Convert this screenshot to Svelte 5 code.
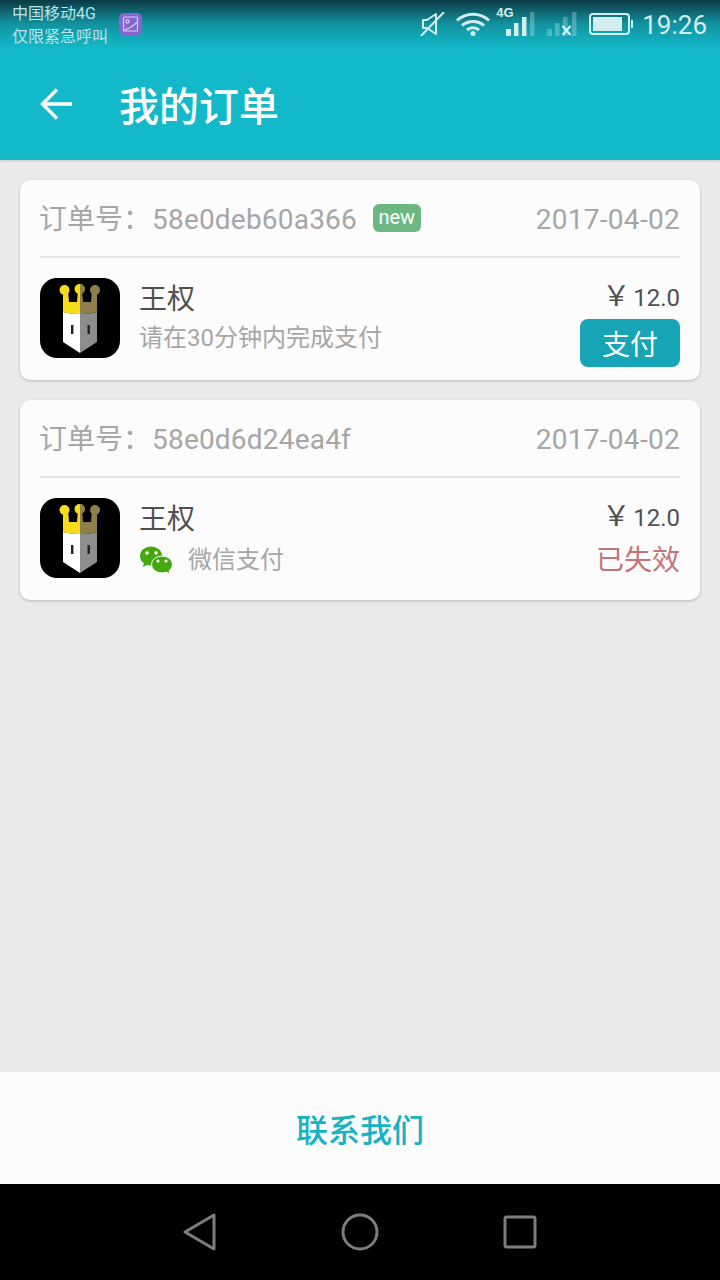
<script>
  const orders = [
    { id: '58e0deb60a366', isNew: true, date: '2017-04-02', name: '王权', price: '12.0', note: '请在30分钟内完成支付', paid: false },
    { id: '58e0d6d24ea4f', isNew: false, date: '2017-04-02', name: '王权', price: '12.0', note: '微信支付', paid: true }
  ];
</script>

<div class="page">
  <header class="header">
    <div class="status">
      <div class="carrier">
        <div>中国移动4G</div>
        <div>仅限紧急呼叫</div>
      </div>
      <span class="gallery">
        <svg viewBox="0 0 23 22" width="23" height="22" fill="none" stroke="#d9cff2" stroke-width="1.2">
          <rect x="4.500" y="4" width="14" height="14" rx="1" />
          <circle cx="8.500" cy="8.500" r="1.600" />
          <path d="M5 17.500C9 16 13 14 18 9.500" />
        </svg>
      </span>
      <div class="status-right">
        <svg class="mute" viewBox="0 0 26 24" width="26" height="24" fill="none" stroke="#d4eef0" stroke-width="2">
          <path d="M3 8h4l9-6v20l-9-6H3z" stroke-linejoin="round" />
          <path d="M1 24 24 0" />
        </svg>
        <svg class="wifi" viewBox="0 0 34 24" width="34" height="24" fill="none" stroke="#d4eef0" stroke-width="3">
          <path d="M1 8.500C10 0 24 0 33 8.500" />
          <path d="M6 13.500C12.500 8 21.500 8 28 13.500" />
          <path d="M11 18C14.500 15 19.500 15 23 18" />
          <circle cx="17" cy="21.500" r="2.500" fill="#d4eef0" stroke="none" />
        </svg>
        <span class="net">4G</span>
        <svg class="signal" viewBox="0 0 30 24" width="30" height="24">
          <rect x="1" y="17" width="5" height="7" fill="#d4eef0" />
          <rect x="9" y="11" width="4.500" height="13" fill="#d4eef0" />
          <rect x="17" y="5" width="4.500" height="19" fill="#d4eef0" />
          <rect x="25" y="0" width="4.500" height="24" fill="#d4eef0" opacity="0.3" />
        </svg>
        <svg class="signal2" viewBox="0 0 30 24" width="30" height="24">
          <rect x="0" y="17" width="5" height="7" fill="#d4eef0" opacity="0.3" />
          <rect x="8" y="11" width="4.500" height="13" fill="#d4eef0" opacity="0.3" />
          <rect x="16" y="5" width="4.500" height="19" fill="#d4eef0" opacity="0.3" />
          <rect x="25" y="0" width="4.500" height="24" fill="#d4eef0" opacity="0.3" />
          <path d="M15.500 14l8 9M23.500 14l-8 9" stroke="#e4f5f6" stroke-width="2" />
        </svg>
        <svg class="battery" viewBox="0 0 46 24" width="46" height="24">
          <rect x="2" y="2" width="39" height="20" rx="3" fill="none" stroke="#d4eef0" stroke-width="2" />
          <rect x="5" y="5" width="29" height="14" fill="#d4eef0" />
          <rect x="43" y="8" width="2" height="8" fill="#d4eef0" />
        </svg>
        <span class="time">19:26</span>
      </div>
    </div>
    <div class="toolbar">
      <svg class="back" viewBox="0 0 36 36" width="36" height="36" fill="none" stroke="#fff" stroke-width="3.400">
        <path d="M34 18H5M19 3.500 4.500 18 19 32.500" />
      </svg>
      <h1>我的订单</h1>
    </div>
  </header>

  <main class="list">
    {#each orders as order}
      <section class="card">
        <div class="card-head">
          <span class="order-no">订单号：<span class="order-id">{order.id}</span></span>
          {#if order.isNew}
            <span class="badge">new</span>
          {/if}
          <span class="date">{order.date}</span>
        </div>
        <div class="card-body">
          <svg class="app-icon" viewBox="0 0 80 80" width="80" height="80">
            <rect width="80" height="80" rx="17" fill="#000" />
            <path d="M23 12h5l1 12h8l1-12h2v24c-6 0-12-.5-17-2z" fill="#f7dc1e" />
            <path d="M40 12h2l1 12h8l1-12h5v22c-5 1.500-11 2-17 2z" fill="#8f7f4c" />
            <circle cx="24.500" cy="12" r="5" fill="#f7dc1e" />
            <circle cx="39.500" cy="11" r="5" fill="#f7dc1e" />
            <path d="M40 6a5 5 0 0 1 0 10z" fill="#8f7f4c" />
            <circle cx="55" cy="12" r="5" fill="#8f7f4c" />
            <path d="M23 34c5 1.500 11 2 17 2v39L23 64z" fill="#fff" />
            <path d="M40 36c6 0 12-.5 17-2v30L40 75z" fill="#8d8d8d" />
            <rect x="31" y="47" width="2.400" height="9" fill="#222" />
            <rect x="47.500" y="47" width="2.400" height="9" fill="#222" />
          </svg>
          <div class="info">
            <div class="name">{order.name}</div>
            {#if order.paid}
              <div class="note paid">
                <svg class="wechat" viewBox="0 0 32 28" width="32" height="28">
                  <ellipse cx="11" cy="10" rx="11" ry="9.500" fill="#45a80f" />
                  <path d="M4 16l-1 5 6-3z" fill="#45a80f" />
                  <ellipse cx="22" cy="18.500" rx="10.500" ry="8.500" fill="#45a80f" stroke="#fcfcfc" stroke-width="1" />
                  <path d="M26 25l3 2.500-.5-4.500z" fill="#45a80f" />
                  <circle cx="7" cy="7" r="1.700" fill="#fff" />
                  <circle cx="16" cy="7" r="1.700" fill="#fff" />
                  <circle cx="18" cy="15" r="1.500" fill="#fff" />
                  <circle cx="26" cy="15" r="1.500" fill="#fff" />
                </svg>
                <span>{order.note}</span>
              </div>
            {:else}
              <div class="note">{order.note}</div>
            {/if}
          </div>
          <div class="side">
            <div class="price"><span class="yen">￥</span>{order.price}</div>
            {#if order.paid}
              <div class="expired">已失效</div>
            {:else}
              <button class="pay">支付</button>
            {/if}
          </div>
        </div>
      </section>
    {/each}
  </main>

  <div class="contact">联系我们</div>

  <nav class="nav">
    <svg viewBox="0 0 36 40" width="36" height="40" fill="none" stroke="#7d7d7d" stroke-width="3" stroke-linejoin="round">
      <path d="M32 3v34L3 20z" />
    </svg>
    <svg viewBox="0 0 40 40" width="40" height="40" fill="none" stroke="#7d7d7d" stroke-width="3">
      <circle cx="20" cy="20" r="17" />
    </svg>
    <svg viewBox="0 0 36 36" width="36" height="36" fill="none" stroke="#7d7d7d" stroke-width="3" stroke-linejoin="round">
      <rect x="3" y="3" width="30" height="30" rx="1.500" />
    </svg>
  </nav>
</div>

<style>
  :global(body) {
    margin: 0;
    font-family: Roboto, "Noto Sans CJK SC", sans-serif;
  }

  .page {
    display: flex;
    flex-direction: column;
    width: 720px;
    height: 1280px;
    background: #eaeaea;
    overflow: hidden;
  }

  .header {
    height: 160px;
    flex-shrink: 0;
    background: linear-gradient(180deg, #0b3a44 0, #12929f 24px, #13b8c9 48px, #13b8c9 100%);
    box-shadow: 0 1px 2px rgba(0, 0, 0, 0.15);
    position: relative;
  }

  .status {
    display: flex;
    align-items: center;
    height: 48px;
    padding: 0 13px 0 12px;
  }

  .carrier {
    font-size: 16px;
    line-height: 23px;
    color: #b9e5e8;
    width: 107px;
    padding-top: 2px;
  }

  .gallery {
    display: flex;
    width: 23px;
    height: 22px;
    border-radius: 5px;
    background: #8565cf;
  }

  .status-right {
    display: flex;
    align-items: center;
    margin-left: auto;
    position: relative;
    color: #d4eef0;
  }

  .mute {
    margin-right: 10px;
  }

  .wifi {
    margin-right: 15px;
  }

  .net {
    position: absolute;
    left: 76px;
    top: -4px;
    font-size: 13px;
    font-weight: 700;
    font-family: "Liberation Sans", sans-serif;
  }

  .signal {
    margin-right: 12px;
  }

  .signal2 {
    margin-right: 11px;
  }

  .battery {
    margin-right: 8px;
  }

  .time {
    font-size: 26px;
    position: relative;
    top: 1px;
  }

  .toolbar {
    display: flex;
    align-items: center;
    height: 112px;
    padding-left: 38px;
  }

  .back {
    margin-right: 45px;
  }

  h1 {
    margin: 0;
    font-size: 40px;
    font-weight: 500;
    color: #fff;
  }

  .list {
    flex: 1;
    display: flex;
    flex-direction: column;
    gap: 20px;
    padding: 20px 20px 0;
  }

  .card {
    height: 200px;
    padding: 0 20px;
    box-sizing: border-box;
    background: #fcfcfc;
    border-radius: 10px;
    box-shadow: 0 1px 3px rgba(0, 0, 0, 0.22);
  }

  .card-head {
    display: flex;
    align-items: baseline;
    height: 76px;
    border-bottom: 2px solid #e2e2e2;
    font-size: 28px;
    line-height: 80px;
    color: #a6a6a6;
  }

  .order-no {
    margin-left: -1px;
  }

  .order-id {
    margin-left: 1px;
    letter-spacing: 0.2px;
  }

  .badge {
    align-self: center;
    margin-left: 16px;
    padding: 0 5.500px;
    height: 28px;
    line-height: 27px;
    font-size: 20px;
    color: #fff;
    background: #6db782;
    border-radius: 6px;
  }

  .date {
    margin-left: auto;
    letter-spacing: 0.3px;
  }

  .card-body {
    display: flex;
    align-items: flex-start;
    padding-top: 20px;
  }

  .app-icon {
    flex-shrink: 0;
    margin-right: 19px;
  }

  .info {
    flex: 1;
    padding-top: 2px;
  }

  .name {
    font-size: 28px;
    line-height: 40px;
    color: #505050;
  }

  .note {
    font-size: 24px;
    line-height: 36px;
    color: #a6a6a6;
  }

  .note.paid {
    display: flex;
    align-items: center;
    gap: 16px;
    line-height: 40px;
    margin-left: 1px;
  }

  .side {
    display: flex;
    flex-direction: column;
    align-items: flex-end;
  }

  .price {
    font-size: 24px;
    line-height: 40px;
    color: #505050;
  }

  .yen {
    font-size: 28px;
    line-height: 0;
    margin-right: 3px;
  }

  .pay {
    width: 100px;
    height: 48px;
    margin-top: 1px;
    padding: 0;
    border: 0;
    border-radius: 8px;
    background: #16a4b6;
    color: #fff;
    font: inherit;
    font-size: 28px;
  }

  .expired {
    font-size: 28px;
    line-height: 46px;
    color: #c5757a;
  }

  .contact {
    height: 112px;
    flex-shrink: 0;
    display: flex;
    align-items: center;
    justify-content: center;
    background: #fcfcfc;
    color: #17b3c4;
    font-size: 32px;
    font-weight: 500;
  }

  .nav {
    height: 96px;
    flex-shrink: 0;
    display: flex;
    align-items: center;
    justify-content: center;
    gap: 122px;
    background: #000;
  }
</style>
